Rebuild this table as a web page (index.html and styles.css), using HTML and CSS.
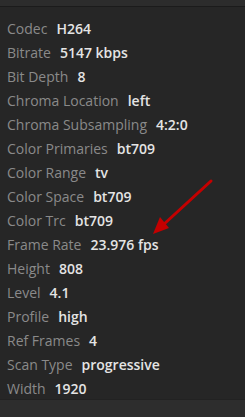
FILE: index.html
```html
<!DOCTYPE html>
<html>
<head>
<meta charset="utf-8">
<link rel="stylesheet" href="styles.css">
</head>
<body>
<div class="panel">
  <div class="topbar"></div>
  <div class="list">
    <div class="row"><span class="k">Codec</span><span class="v">H264</span></div>
    <div class="row"><span class="k">Bitrate</span><span class="v">5147 kbps</span></div>
    <div class="row"><span class="k">Bit Depth</span><span class="v">8</span></div>
    <div class="row"><span class="k">Chroma Location</span><span class="v">left</span></div>
    <div class="row"><span class="k">Chroma Subsampling</span><span class="v">4:2:0</span></div>
    <div class="row"><span class="k">Color Primaries</span><span class="v">bt709</span></div>
    <div class="row"><span class="k">Color Range</span><span class="v">tv</span></div>
    <div class="row"><span class="k">Color Space</span><span class="v">bt709</span></div>
    <div class="row"><span class="k">Color Trc</span><span class="v">bt709</span></div>
    <div class="row"><span class="k">Frame Rate</span><span class="v">23.976 fps</span></div>
    <div class="row"><span class="k">Height</span><span class="v">808</span></div>
    <div class="row"><span class="k">Level</span><span class="v">4.1</span></div>
    <div class="row"><span class="k">Profile</span><span class="v">high</span></div>
    <div class="row"><span class="k">Ref Frames</span><span class="v">4</span></div>
    <div class="row"><span class="k">Scan Type</span><span class="v">progressive</span></div>
    <div class="row"><span class="k">Width</span><span class="v">1920</span></div>
  </div>
  <div class="footer"></div>
  <svg class="arrow" width="245" height="417" viewBox="0 0 245 417">
    <line x1="211" y1="181" x2="163" y2="225" stroke="#c40000" stroke-width="3" stroke-linecap="round"/>
    <polygon points="153,234 160,217 169,228" fill="#c40000"/>
  </svg>
</div>
</body>
</html>
```
FILE: styles.css
```css
html, body {
  margin: 0;
  padding: 0;
  background: #262626;
}
.panel {
  position: relative;
  width: 245px;
  height: 417px;
  display: flex;
  flex-direction: column;
  overflow: hidden;
  font-family: "Open Sans", "DejaVu Sans", sans-serif;
  font-size: 14px;
}
.topbar {
  height: 6px;
  background: #2c2c2c;
  border-bottom: 1px solid #1b1b1b;
  flex: none;
}
.list {
  flex: 1;
  overflow: hidden;
  padding: 10px 0 0 7px;
}
.row {
  height: 24px;
  line-height: 24px;
  white-space: nowrap;
}
.k {
  color: #8a8a8a;
  margin-right: 9px;
}
.v {
  color: #e4e4e4;
  font-weight: 600;
}
.footer {
  flex: none;
  height: 17px;
  background: #2d2d2d;
  border-top: 1px solid #222;
}
.arrow {
  position: absolute;
  left: 0;
  top: 0;
  pointer-events: none;
}
```
